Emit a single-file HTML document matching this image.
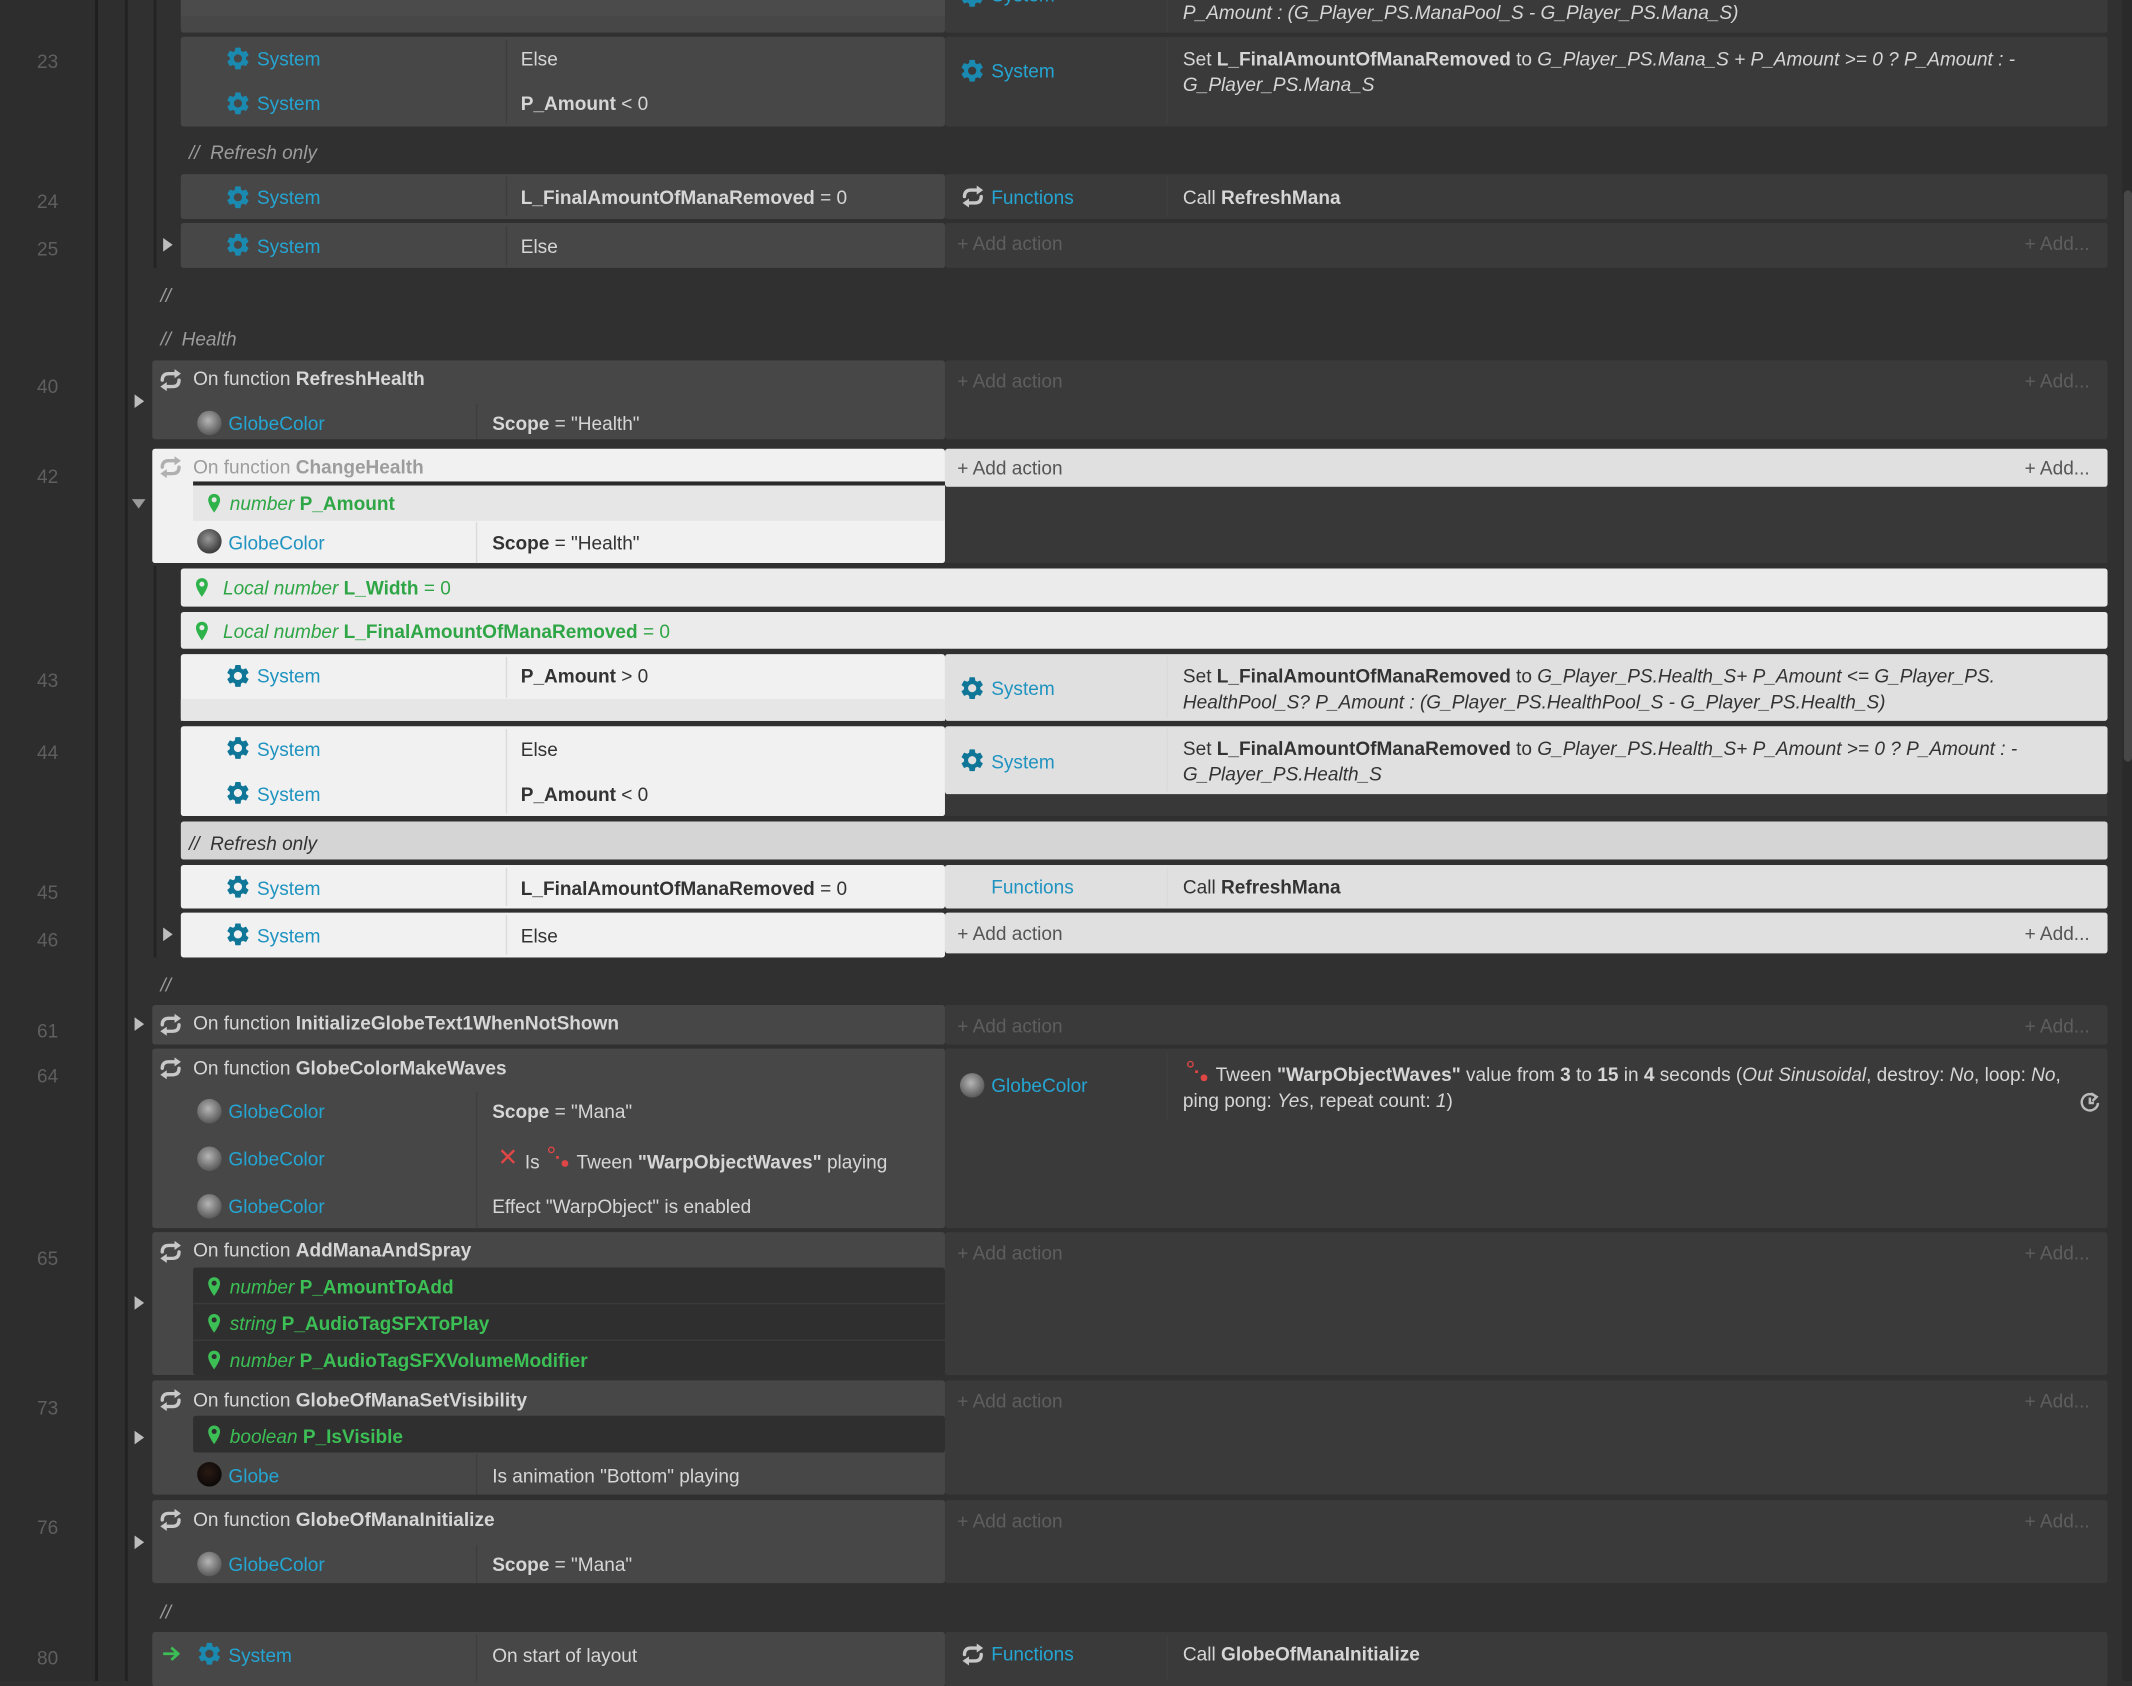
<!DOCTYPE html>
<html><head><meta charset="utf-8">
<style>
*{margin:0;padding:0;box-sizing:border-box}
html,body{width:2132px;height:1681px;overflow:hidden;background:#303030}
#w{position:absolute;left:0;top:0;width:1568px;height:1236px;transform:scale(1.35969,1.36003);transform-origin:0 0;background:#303030;font-family:"Liberation Sans",sans-serif;font-size:14px;color:#d6d6d6}
.b{position:absolute}
.t{position:absolute;white-space:nowrap;line-height:18px}
.bl{color:#25a5d2}
.lb{color:#1f93c0}
.g{color:#3cbf55}
.lg{color:#2ea645}
.gr{color:#5e5e5e}
.ln{position:absolute;width:70px;text-align:center;color:#5f5f5f;font-size:14px}
.i{font-style:italic}
.k{font-weight:bold}
.cd{background:#474747;border-radius:2px}
.ad{background:#3a3a3a;border-radius:2px}
.cl{background:#f1f1f1;border-radius:2px}
.al{background:#e0e0e0;border-radius:2px}
.dv{position:absolute;width:1px;background:#3e3e3e}
.dvl{position:absolute;width:1px;background:#dadada}
.dk{color:#333}
svg{position:absolute;overflow:visible}
.tri{position:absolute;width:0;height:0;border-top:5px solid transparent;border-bottom:5px solid transparent;border-left:7px solid #bdbdbd}
.trd{position:absolute;width:0;height:0;border-left:5px solid transparent;border-right:5px solid transparent;border-top:7px solid #9a9a9a}
.globe{position:absolute;width:18px;height:18px;border-radius:50%;background:radial-gradient(circle at 45% 40%,#b5b5b5,#6a6a6a 60%,#3a3a3a)}
</style></head><body>
<svg width="0" height="0" style="position:absolute">
<defs>
<symbol id="gear" viewBox="0 0 24 24"><path fill-rule="evenodd" d="M19.14,12.94c0.04-0.3,0.06-0.61,0.06-0.94c0-0.32-0.02-0.64-0.07-0.94l2.03-1.58c0.18-0.14,0.23-0.41,0.12-0.61l-1.92-3.32c-0.12-0.22-0.37-0.29-0.59-0.22l-2.39,0.96c-0.5-0.38-1.03-0.7-1.620-0.94L14.4,2.81c-0.04-0.24-0.24-0.41-0.48-0.41h-3.84c-0.24,0-0.43,0.17-0.47,0.41L9.25,5.35C8.66,5.59,8.12,5.92,7.63,6.29L5.24,5.33c-0.22-0.08-0.47,0-0.59,0.22L2.74,8.87C2.62,9.08,2.66,9.34,2.86,9.48l2.03,1.58C4.84,11.36,4.8,11.69,4.8,12s0.02,0.64,0.07,0.94l-2.03,1.58c-0.18,0.14-0.23,0.41-0.12,0.61l1.92,3.32c0.12,0.22,0.37,0.29,0.59,0.22l2.39-0.96c0.5,0.38,1.03,0.7,1.62,0.94l0.36,2.54c0.05,0.24,0.24,0.41,0.48,0.41h3.84c0.24,0,0.44-0.17,0.47-0.41l0.36-2.54c0.59-0.24,1.13-0.56,1.62-0.94l2.39,0.96c0.22,0.08,0.47,0,0.59-0.22l1.92-3.32c0.12-0.22,0.07-0.47-0.12-0.61L19.14,12.94z M12,15.6c-1.98,0-3.6-1.62-3.6-3.6s1.62-3.6,3.6-3.6s3.6,1.62,3.6,3.6S13.98,15.6,12,15.6z"/></symbol>
<symbol id="cyc" viewBox="0 0 20 20"><g fill="none" stroke-width="2.6" stroke-linecap="round"><path d="M3.5 10 Q3.5 5 8.5 5 H13"/><path d="M16.5 10 Q16.5 15 11.5 15 H7"/></g><path stroke="none" d="M13 1.5 L18 5 L13 8.5Z"/><path stroke="none" d="M7 11.5 L2 15 L7 18.5Z"/></symbol>
<symbol id="pin" viewBox="0 0 24 24"><path fill-rule="evenodd" d="M12 1C7.9 1 5 4.1 5 8.2c0 5.5 7 14.8 7 14.8s7-9.3 7-14.8C19 4.1 16.1 1 12 1zm0 10a3 3 0 110-6 3 3 0 010 6z"/></symbol>
</defs></svg>
<div id="w">
<div class="b" style="left:0;top:0;width:70px;height:1236px;background:#2d2d2d"></div>
<div class="b" style="left:70px;top:0;width:2px;height:1236px;background:#1e1e1e"></div>
<div class="b" style="left:72px;top:0;width:20px;height:1236px;background:#2e2e2e"></div>
<div class="b" style="left:92px;top:0;width:2px;height:1236px;background:#222"></div>
<div class="b" style="left:113px;top:0;width:2px;height:197px;background:#232323"></div>
<div class="b" style="left:113px;top:416px;width:2px;height:288px;background:#232323"></div>
<div class="b" style="left:1561px;top:0;width:7px;height:1236px;background:#2a2a2a"></div>
<div class="b" style="left:1562px;top:140px;width:6px;height:420px;background:#474747;border-radius:3px"></div>

<div class="ln" style="top:37px">23</div>
<div class="ln" style="top:140px">24</div>
<div class="ln" style="top:175px">25</div>
<div class="ln" style="top:276px">40</div>
<div class="ln" style="top:342px">42</div>
<div class="ln" style="top:492px">43</div>
<div class="ln" style="top:545px">44</div>
<div class="ln" style="top:648px">45</div>
<div class="ln" style="top:683px">46</div>
<div class="ln" style="top:750px">61</div>
<div class="ln" style="top:783px">64</div>
<div class="ln" style="top:917px">65</div>
<div class="ln" style="top:1027px">73</div>
<div class="ln" style="top:1115px">76</div>
<div class="ln" style="top:1211px">80</div>

<div class="b cd" style="left:133px;top:-4px;width:562px;height:28px"></div>
<div class="b" style="left:133px;top:0;width:562px;height:12px;background:#4b4b4b"></div>
<div class="b ad" style="left:695px;top:-4px;width:855px;height:28px"></div>
<div class="dv" style="left:858px;top:0;height:24px"></div>
<svg style="left:705px;top:-13px" width="20" height="20" fill="#1b8ab0"><use href="#gear"/></svg>
<div class="t bl" style="left:729px;top:-13px">System</div>
<div class="t i" style="left:870px;top:0px">P_Amount : (G_Player_PS.ManaPool_S - G_Player_PS.Mana_S)</div>

<div class="b cd" style="left:133px;top:27px;width:562px;height:66px"></div>
<div class="dv" style="left:372px;top:29px;height:62px"></div>
<svg style="left:165px;top:33px" width="20" height="20" fill="#1b8ab0"><use href="#gear"/></svg>
<div class="t bl" style="left:189px;top:34px">System</div>
<div class="t" style="left:383px;top:34px">Else</div>
<svg style="left:165px;top:66px" width="20" height="20" fill="#1b8ab0"><use href="#gear"/></svg>
<div class="t bl" style="left:189px;top:67px">System</div>
<div class="t" style="left:383px;top:67px"><b>P_Amount</b> &lt; 0</div>
<div class="b ad" style="left:695px;top:27px;width:855px;height:66px"></div>
<div class="dv" style="left:858px;top:29px;height:62px"></div>
<svg style="left:705px;top:42px" width="20" height="20" fill="#1b8ab0"><use href="#gear"/></svg>
<div class="t bl" style="left:729px;top:43px">System</div>
<div class="t" style="left:870px;top:34px">Set <b>L_FinalAmountOfManaRemoved</b> to <i>G_Player_PS.Mana_S + P_Amount &gt;= 0 ? P_Amount : -</i></div>
<div class="t i" style="left:870px;top:53px">G_Player_PS.Mana_S</div>

<div class="t i" style="left:139px;top:103px;color:#9c9c9c">//&nbsp; Refresh only</div>

<div class="b cd" style="left:133px;top:128px;width:562px;height:33px"></div>
<div class="dv" style="left:372px;top:130px;height:29px"></div>
<svg style="left:165px;top:135px" width="20" height="20" fill="#1b8ab0"><use href="#gear"/></svg>
<div class="t bl" style="left:189px;top:136px">System</div>
<div class="t" style="left:383px;top:136px"><b>L_FinalAmountOfManaRemoved</b> = 0</div>
<div class="b ad" style="left:695px;top:128px;width:855px;height:33px"></div>
<div class="dv" style="left:858px;top:130px;height:29px"></div>
<svg style="left:706px;top:135px" width="19" height="19" fill="#c8c8c8" stroke="#c8c8c8"><use href="#cyc"/></svg>
<div class="t bl" style="left:729px;top:136px">Functions</div>
<div class="t" style="left:870px;top:136px">Call <b>RefreshMana</b></div>

<div class="b cd" style="left:133px;top:164px;width:562px;height:33px"></div>
<div class="dv" style="left:372px;top:166px;height:29px"></div>
<div class="tri" style="left:120px;top:175px"></div>
<svg style="left:165px;top:170px" width="20" height="20" fill="#1b8ab0"><use href="#gear"/></svg>
<div class="t bl" style="left:189px;top:172px">System</div>
<div class="t" style="left:383px;top:172px">Else</div>
<div class="b ad" style="left:695px;top:164px;width:855px;height:33px"></div>
<div class="t gr" style="left:704px;top:170px">+ Add action</div>
<div class="t gr" style="left:1489px;top:170px">+ Add...</div>

<div class="t i" style="left:118px;top:208px;color:#9c9c9c">//</div>
<div class="t i" style="left:118px;top:240px;color:#9c9c9c">//&nbsp; Health</div>

<div class="b cd" style="left:112px;top:265px;width:583px;height:58px"></div>
<div class="dv" style="left:350px;top:297px;height:26px"></div>
<div class="tri" style="left:99px;top:290px"></div>
<svg style="left:116px;top:270px" width="19" height="19" fill="#c8c8c8" stroke="#c8c8c8"><use href="#cyc"/></svg>
<div class="t" style="left:142px;top:269px">On function <b>RefreshHealth</b></div>
<div class="globe" style="left:145px;top:302px"></div>
<div class="t bl" style="left:168px;top:302px">GlobeColor</div>
<div class="t" style="left:362px;top:302px"><b>Scope</b> = "Health"</div>
<div class="b ad" style="left:695px;top:265px;width:855px;height:58px"></div>
<div class="t gr" style="left:704px;top:271px">+ Add action</div>
<div class="t gr" style="left:1489px;top:271px">+ Add...</div>

<div class="b cl" style="left:112px;top:330px;width:583px;height:84px"></div>
<div class="b" style="left:142px;top:354px;width:553px;height:3px;background:#2a2a2a"></div>
<div class="b" style="left:142px;top:357px;width:553px;height:26px;background:#e6e6e6"></div>
<div class="dvl" style="left:350px;top:384px;height:30px"></div>
<div class="trd" style="left:97px;top:367px"></div>
<svg style="left:116px;top:334px" width="19" height="19" fill="#b0b0b0" stroke="#b0b0b0"><use href="#cyc"/></svg>
<div class="t" style="left:142px;top:334px;color:#9d9d9d">On function <b>ChangeHealth</b></div>
<svg style="left:150px;top:361px" width="15" height="18" fill="#2eb34a"><use href="#pin"/></svg>
<div class="t lg" style="left:169px;top:361px"><i>number</i> <b>P_Amount</b></div>
<div class="globe" style="left:145px;top:389px;background:radial-gradient(circle at 45% 40%,#999,#4a4a4a 60%,#222)"></div>
<div class="t lb" style="left:168px;top:390px">GlobeColor</div>
<div class="t dk" style="left:362px;top:390px"><b>Scope</b> = "Health"</div>
<div class="b al" style="left:695px;top:330px;width:855px;height:28px"></div>
<div class="t" style="left:704px;top:335px;color:#555">+ Add action</div>
<div class="t" style="left:1489px;top:335px;color:#555">+ Add...</div>
<div class="b" style="left:695px;top:358px;width:855px;height:56px;background:#383838"></div>

<div class="b" style="left:133px;top:418px;width:1417px;height:28px;background:#ebebeb;border-radius:2px"></div>
<svg style="left:141px;top:423px" width="15" height="18" fill="#2eb34a"><use href="#pin"/></svg>
<div class="t lg" style="left:164px;top:423px"><i>Local number</i> <b>L_Width</b> = 0</div>
<div class="b" style="left:133px;top:450px;width:1417px;height:27px;background:#ebebeb;border-radius:2px"></div>
<svg style="left:141px;top:455px" width="15" height="18" fill="#2eb34a"><use href="#pin"/></svg>
<div class="t lg" style="left:164px;top:455px"><i>Local number</i> <b>L_FinalAmountOfManaRemoved</b> = 0</div>

<div class="b cl" style="left:133px;top:481px;width:562px;height:49px"></div>
<div class="b" style="left:133px;top:514px;width:562px;height:16px;background:#e6e6e6"></div>
<div class="dvl" style="left:372px;top:483px;height:30px"></div>
<svg style="left:165px;top:487px" width="20" height="20" fill="#0f7698"><use href="#gear"/></svg>
<div class="t lb" style="left:189px;top:488px">System</div>
<div class="t dk" style="left:383px;top:488px"><b>P_Amount</b> &gt; 0</div>
<div class="b al" style="left:695px;top:481px;width:855px;height:49px"></div>
<div class="dvl" style="left:858px;top:483px;height:45px"></div>
<svg style="left:705px;top:496px" width="20" height="20" fill="#0f7698"><use href="#gear"/></svg>
<div class="t lb" style="left:729px;top:497px">System</div>
<div class="t dk" style="left:870px;top:488px">Set <b>L_FinalAmountOfManaRemoved</b> to <i>G_Player_PS.Health_S+ P_Amount &lt;= G_Player_PS.</i></div>
<div class="t dk i" style="left:870px;top:507px">HealthPool_S? P_Amount : (G_Player_PS.HealthPool_S - G_Player_PS.Health_S)</div>

<div class="b cl" style="left:133px;top:534px;width:562px;height:66px"></div>
<div class="dvl" style="left:372px;top:536px;height:62px"></div>
<svg style="left:165px;top:540px" width="20" height="20" fill="#0f7698"><use href="#gear"/></svg>
<div class="t lb" style="left:189px;top:542px">System</div>
<div class="t dk" style="left:383px;top:542px">Else</div>
<svg style="left:165px;top:573px" width="20" height="20" fill="#0f7698"><use href="#gear"/></svg>
<div class="t lb" style="left:189px;top:575px">System</div>
<div class="t dk" style="left:383px;top:575px"><b>P_Amount</b> &lt; 0</div>
<div class="b al" style="left:695px;top:534px;width:855px;height:50px"></div>
<div class="b" style="left:695px;top:584px;width:855px;height:16px;background:#383838"></div>
<div class="dvl" style="left:858px;top:536px;height:46px"></div>
<svg style="left:705px;top:549px" width="20" height="20" fill="#0f7698"><use href="#gear"/></svg>
<div class="t lb" style="left:729px;top:551px">System</div>
<div class="t dk" style="left:870px;top:541px">Set <b>L_FinalAmountOfManaRemoved</b> to <i>G_Player_PS.Health_S+ P_Amount &gt;= 0 ? P_Amount : -</i></div>
<div class="t dk i" style="left:870px;top:560px">G_Player_PS.Health_S</div>

<div class="b" style="left:133px;top:604px;width:1417px;height:28px;background:#d5d5d5;border-radius:2px"></div>
<div class="t i dk" style="left:139px;top:611px">//&nbsp; Refresh only</div>

<div class="b cl" style="left:133px;top:636px;width:562px;height:32px"></div>
<div class="dvl" style="left:372px;top:638px;height:28px"></div>
<svg style="left:165px;top:642px" width="20" height="20" fill="#0f7698"><use href="#gear"/></svg>
<div class="t lb" style="left:189px;top:644px">System</div>
<div class="t dk" style="left:383px;top:644px"><b>L_FinalAmountOfManaRemoved</b> = 0</div>
<div class="b al" style="left:695px;top:636px;width:855px;height:32px"></div>
<div class="dvl" style="left:858px;top:638px;height:28px"></div>
<div class="t lb" style="left:729px;top:643px">Functions</div>
<div class="t dk" style="left:870px;top:643px">Call <b>RefreshMana</b></div>

<div class="b cl" style="left:133px;top:671px;width:562px;height:33px"></div>
<div class="dvl" style="left:372px;top:673px;height:29px"></div>
<div class="tri" style="left:120px;top:682px"></div>
<svg style="left:165px;top:677px" width="20" height="20" fill="#0f7698"><use href="#gear"/></svg>
<div class="t lb" style="left:189px;top:679px">System</div>
<div class="t dk" style="left:383px;top:679px">Else</div>
<div class="b al" style="left:695px;top:671px;width:855px;height:30px"></div>
<div class="t" style="left:704px;top:677px;color:#555">+ Add action</div>
<div class="t" style="left:1489px;top:677px;color:#555">+ Add...</div>

<div class="t i" style="left:118px;top:715px;color:#9c9c9c">//</div>

<div class="b cd" style="left:112px;top:739px;width:583px;height:29px"></div>
<div class="tri" style="left:99px;top:748px"></div>
<svg style="left:116px;top:744px" width="19" height="19" fill="#c8c8c8" stroke="#c8c8c8"><use href="#cyc"/></svg>
<div class="t" style="left:142px;top:743px">On function <b>InitializeGlobeText1WhenNotShown</b></div>
<div class="b ad" style="left:695px;top:739px;width:855px;height:29px"></div>
<div class="t gr" style="left:704px;top:745px">+ Add action</div>
<div class="t gr" style="left:1489px;top:745px">+ Add...</div>

<div class="b cd" style="left:112px;top:771px;width:583px;height:132px"></div>
<div class="dv" style="left:350px;top:803px;height:100px"></div>
<svg style="left:116px;top:776px" width="19" height="19" fill="#c8c8c8" stroke="#c8c8c8"><use href="#cyc"/></svg>
<div class="t" style="left:142px;top:776px">On function <b>GlobeColorMakeWaves</b></div>
<div class="globe" style="left:145px;top:808px"></div>
<div class="t bl" style="left:168px;top:808px">GlobeColor</div>
<div class="t" style="left:362px;top:808px"><b>Scope</b> = "Mana"</div>
<div class="globe" style="left:145px;top:843px"></div>
<div class="t bl" style="left:168px;top:843px">GlobeColor</div>
<div class="t" style="left:366px;top:842px;color:#e04646;font-size:18px">✕</div>
<div class="t" style="left:386px;top:845px">Is</div>
<div class="b" style="left:403px;top:843px;width:5px;height:5px;border:1.5px solid #e04646;border-radius:50%"></div>
<div class="b" style="left:409px;top:850px;width:2px;height:2px;background:#e04646"></div>
<div class="b" style="left:413px;top:853px;width:5px;height:5px;background:#e04646;border-radius:50%"></div>
<div class="t" style="left:424px;top:845px">Tween <b>"WarpObjectWaves"</b> playing</div>
<div class="globe" style="left:145px;top:878px"></div>
<div class="t bl" style="left:168px;top:878px">GlobeColor</div>
<div class="t" style="left:362px;top:878px">Effect "WarpObject" is enabled</div>
<div class="b ad" style="left:695px;top:771px;width:855px;height:132px"></div>
<div class="dv" style="left:858px;top:773px;height:50px"></div>
<div class="globe" style="left:706px;top:789px"></div>
<div class="t bl" style="left:729px;top:789px">GlobeColor</div>
<div class="b" style="left:873px;top:780px;width:5px;height:5px;border:1.5px solid #e04646;border-radius:50%"></div>
<div class="b" style="left:879px;top:787px;width:2px;height:2px;background:#e04646"></div>
<div class="b" style="left:883px;top:790px;width:5px;height:5px;background:#e04646;border-radius:50%"></div>
<div class="t" style="left:894px;top:781px">Tween <b>"WarpObjectWaves"</b> value from <b>3</b> to <b>15</b> in <b>4</b> seconds (<i>Out Sinusoidal</i>, destroy: <i>No</i>, loop: <i>No</i>,</div>
<div class="t" style="left:870px;top:800px">ping pong: <i>Yes</i>, repeat count: <i>1</i>)</div>
<svg style="left:1529px;top:802px" width="16" height="16" fill="none" stroke="#bbb" stroke-width="1.8"><path d="M12.5 4.5 A6 6 0 1 0 14 9"/><path d="M9 2 L13 4.5 L10 7.5"/><path d="M8 5 V9 H11"/></svg>

<div class="b cd" style="left:112px;top:906px;width:583px;height:105px"></div>
<div class="b" style="left:142px;top:932px;width:553px;height:79px;background:#2f2f2f;border-radius:2px"></div>
<div class="b" style="left:142px;top:958px;width:553px;height:1px;background:#3a3a3a"></div>
<div class="b" style="left:142px;top:985px;width:553px;height:1px;background:#3a3a3a"></div>
<div class="tri" style="left:99px;top:953px"></div>
<svg style="left:116px;top:911px" width="19" height="19" fill="#c8c8c8" stroke="#c8c8c8"><use href="#cyc"/></svg>
<div class="t" style="left:142px;top:910px">On function <b>AddManaAndSpray</b></div>
<svg style="left:150px;top:937px" width="15" height="18" fill="#3cbf55"><use href="#pin"/></svg>
<div class="t g" style="left:169px;top:937px"><i>number</i> <b>P_AmountToAdd</b></div>
<svg style="left:150px;top:964px" width="15" height="18" fill="#3cbf55"><use href="#pin"/></svg>
<div class="t g" style="left:169px;top:964px"><i>string</i> <b>P_AudioTagSFXToPlay</b></div>
<svg style="left:150px;top:991px" width="15" height="18" fill="#3cbf55"><use href="#pin"/></svg>
<div class="t g" style="left:169px;top:991px"><i>number</i> <b>P_AudioTagSFXVolumeModifier</b></div>
<div class="b ad" style="left:695px;top:906px;width:855px;height:105px"></div>
<div class="t gr" style="left:704px;top:912px">+ Add action</div>
<div class="t gr" style="left:1489px;top:912px">+ Add...</div>

<div class="b cd" style="left:112px;top:1015px;width:583px;height:84px"></div>
<div class="b" style="left:142px;top:1041px;width:553px;height:27px;background:#2f2f2f;border-radius:2px"></div>
<div class="dv" style="left:350px;top:1069px;height:30px"></div>
<div class="tri" style="left:99px;top:1052px"></div>
<svg style="left:116px;top:1020px" width="19" height="19" fill="#c8c8c8" stroke="#c8c8c8"><use href="#cyc"/></svg>
<div class="t" style="left:142px;top:1020px">On function <b>GlobeOfManaSetVisibility</b></div>
<svg style="left:150px;top:1046px" width="15" height="18" fill="#3cbf55"><use href="#pin"/></svg>
<div class="t g" style="left:169px;top:1047px"><i>boolean</i> <b>P_IsVisible</b></div>
<div class="globe" style="left:145px;top:1075px;background:radial-gradient(circle at 45% 40%,#2a1a14,#0d0a08 70%)"></div>
<div class="t bl" style="left:168px;top:1076px">Globe</div>
<div class="t" style="left:362px;top:1076px">Is animation "Bottom" playing</div>
<div class="b ad" style="left:695px;top:1015px;width:855px;height:84px"></div>
<div class="t gr" style="left:704px;top:1021px">+ Add action</div>
<div class="t gr" style="left:1489px;top:1021px">+ Add...</div>

<div class="b cd" style="left:112px;top:1103px;width:583px;height:61px"></div>
<div class="dv" style="left:350px;top:1136px;height:28px"></div>
<div class="tri" style="left:99px;top:1129px"></div>
<svg style="left:116px;top:1108px" width="19" height="19" fill="#c8c8c8" stroke="#c8c8c8"><use href="#cyc"/></svg>
<div class="t" style="left:142px;top:1108px">On function <b>GlobeOfManaInitialize</b></div>
<div class="globe" style="left:145px;top:1141px"></div>
<div class="t bl" style="left:168px;top:1141px">GlobeColor</div>
<div class="t" style="left:362px;top:1141px"><b>Scope</b> = "Mana"</div>
<div class="b ad" style="left:695px;top:1103px;width:855px;height:61px"></div>
<div class="t gr" style="left:704px;top:1109px">+ Add action</div>
<div class="t gr" style="left:1489px;top:1109px">+ Add...</div>

<div class="t i" style="left:118px;top:1176px;color:#9c9c9c">//</div>

<div class="b cd" style="left:112px;top:1200px;width:583px;height:40px"></div>
<div class="dv" style="left:350px;top:1202px;height:34px"></div>
<svg style="left:119px;top:1210px" width="14" height="12" fill="none" stroke="#3cbf55" stroke-width="2"><path d="M1 6 H12 M7 1.5 L12 6 L7 10.5"/></svg>
<svg style="left:144px;top:1206px" width="20" height="20" fill="#1b8ab0"><use href="#gear"/></svg>
<div class="t bl" style="left:168px;top:1208px">System</div>
<div class="t" style="left:362px;top:1208px">On start of layout</div>
<div class="b ad" style="left:695px;top:1200px;width:855px;height:40px"></div>
<div class="dv" style="left:858px;top:1202px;height:34px"></div>
<svg style="left:706px;top:1207px" width="19" height="19" fill="#c8c8c8" stroke="#c8c8c8"><use href="#cyc"/></svg>
<div class="t bl" style="left:729px;top:1207px">Functions</div>
<div class="t" style="left:870px;top:1207px">Call <b>GlobeOfManaInitialize</b></div>
</div>
</body></html>
